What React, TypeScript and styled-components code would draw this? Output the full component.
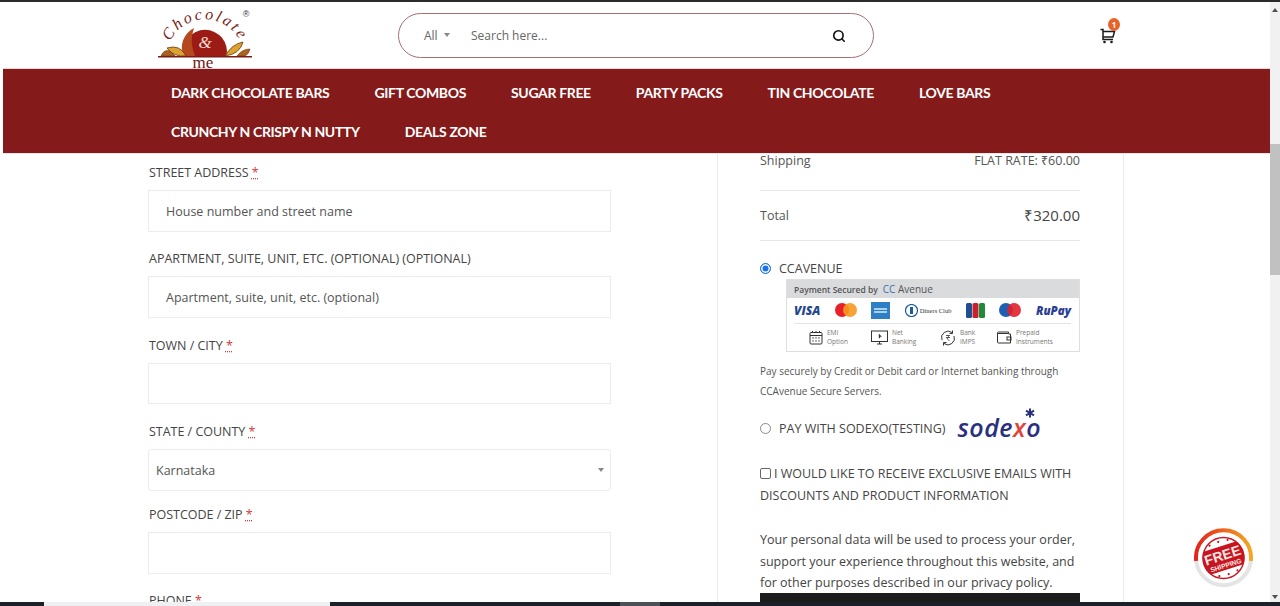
import { createGlobalStyle } from 'styled-components';
import styled from 'styled-components';
import { Search } from 'lucide-react';

const GlobalStyle = createGlobalStyle`
  html, body {
    margin: 0;
    padding: 0;
    background: #fff;
    overflow: hidden;
  }
  * {
    box-sizing: border-box;
  }
`;

const Frame = styled.div`
  width: 1280px;
  height: 606px;
  display: flex;
  flex-direction: column;
  overflow: hidden;
  position: relative;
  font-family: 'Open Sans', sans-serif;
  color: #444;
`;

const TopEdge = styled.div`
  height: 2px;
  flex: none;
  background: #2b2b2b;
`;

const Middle = styled.div`
  flex: 1;
  min-height: 0;
  display: flex;
`;

const Viewport = styled.div`
  flex: 1;
  min-width: 0;
  overflow: hidden;
  padding-left: 3px;
`;

const Header = styled.header`
  height: 67px;
  display: flex;
  align-items: flex-start;
  border-bottom: 1px solid #e9d5d5;
`;

const LogoBox = styled.div`
  width: 100px;
  height: 62px;
  margin-left: 153px;
  margin-top: 2px;
  flex: none;
`;

const SearchBar = styled.div`
  width: 476px;
  height: 45px;
  margin-left: 142px;
  margin-top: 11px;
  border: 1px solid #a66f70;
  border-radius: 23px;
  display: flex;
  align-items: center;
  padding-left: 25px;
  font-size: 12px;
  color: #666;
`;

const AllLabel = styled.span`
  width: 47px;
  display: flex;
  align-items: center;
  gap: 6px;
  &::after {
    content: '';
    border-left: 3px solid transparent;
    border-right: 3px solid transparent;
    border-top: 4px solid #888;
    margin-top: -1px;
  }
`;

const SearchText = styled.span`
  flex: 1;
  color: #666;
`;

const SearchButton = styled.span`
  width: 40px;
  margin-right: 14px;
  display: flex;
  justify-content: center;
  color: #111;
`;

const CartWrap = styled.div`
  position: relative;
  margin-left: 226px;
  margin-top: 25px;
  width: 16px;
  height: 16px;
`;

const CartBadge = styled.span`
  position: absolute;
  top: -9px;
  left: 8px;
  width: 12px;
  height: 13px;
  border-radius: 50%;
  background: #e8622a;
  color: #fff;
  font-size: 8px;
  font-weight: 700;
  line-height: 13px;
  text-align: center;
`;

const Nav = styled.nav`
  height: 85px;
  background: #841b1a;
  padding: 4px 0 0 168px;
  border-bottom: 1px solid #f3e5e5;
`;

const NavRow = styled.div`
  height: 39px;
  display: flex;
  align-items: center;
  gap: 45px;
`;

const NavItem = styled.a`
  color: #fff;
  font-family: 'Lato', sans-serif;
  font-size: 14px;
  font-weight: 700;
  letter-spacing: -0.35px;
  white-space: nowrap;
`;

const Content = styled.main`
  display: flex;
  align-items: flex-start;
  padding-left: 145px;
`;

const FormColumn = styled.section`
  width: 463px;
  padding-top: 9px;
  flex: none;
`;

const Field = styled.div<{ $after: number }>`
  margin-bottom: ${(p) => p.$after}px;
`;

const Label = styled.label`
  display: block;
  height: 20px;
  line-height: 20px;
  margin-bottom: 7px;
  padding-left: 1px;
  font-size: 12.5px;
  letter-spacing: -0.02px;
  color: #444;
  white-space: nowrap;
`;

const Req = styled.abbr`
  color: #d23b3b;
  text-decoration: underline dotted;
`;

const InputBox = styled.div<{ $h: number }>`
  height: ${(p) => p.$h}px;
  border: 1px solid #ececec;
  display: flex;
  align-items: center;
  padding-left: 17px;
  font-size: 12.5px;
  color: #555;
`;

const SelectBox = styled.div`
  height: 42px;
  border: 1px solid #ececec;
  border-radius: 3px;
  display: flex;
  align-items: center;
  justify-content: space-between;
  padding: 0 6px 0 7px;
  font-size: 12.5px;
  color: #555;
  &::after {
    content: '';
    border-left: 3px solid transparent;
    border-right: 3px solid transparent;
    border-top: 4px solid #888;
  }
`;

const OrderColumn = styled.aside`
  width: 407px;
  height: 449px;
  margin-left: 106px;
  padding: 0 43px 0 42px;
  flex: none;
  border-left: 1px solid #eaeaea;
  border-right: 1px solid #eaeaea;
  font-size: 12.5px;
  color: #555;
`;

const TotalRow = styled.div<{ $h: number; $under?: number }>`
  height: ${(p) => p.$h}px;
  padding-bottom: ${(p) => p.$under ?? 0}px;
  display: flex;
  align-items: center;
  justify-content: space-between;
  border-bottom: 1px solid #e6e6e6;
`;

const TotalAmount = styled.span`
  font-size: 15px;
  color: #444;
  padding-bottom: 2px;
`;

const MethodRow = styled.div<{ $top: number }>`
  margin-top: ${(p) => p.$top}px;
  height: 20px;
  display: flex;
  align-items: center;
  gap: 8px;
  color: #444;
  white-space: nowrap;
`;

const Radio = styled.span<{ $on?: boolean }>`
  width: 11px;
  height: 11px;
  flex: none;
  border-radius: 50%;
  border: 1px solid ${(p) => (p.$on ? '#1a73e8' : '#8a8a8a')};
  background: ${(p) => (p.$on ? '#1a73e8' : '#fff')};
  box-shadow: ${(p) => (p.$on ? 'inset 0 0 0 1.5px #fff' : 'none')};
`;

const PayCard = styled.div`
  width: 294px;
  height: 73px;
  margin: 1px 0 0 26px;
  border: 1px solid #dedede;
`;

const PayHead = styled.div`
  height: 18px;
  background: #d9dbdd;
  display: flex;
  align-items: center;
  padding-left: 7px;
  gap: 5px;
  font-size: 8.5px;
  font-weight: 600;
  color: #555;
`;

const CcMark = styled.span`
  font-size: 10px;
  font-weight: 400;
  color: #555;
  b {
    color: #3b6fa8;
    font-weight: 400;
  }
`;

const BrandRow = styled.div`
  height: 26px;
  margin: 0 8px 0 7px;
  display: flex;
  align-items: center;
  justify-content: space-between;
  border-bottom: 1px solid #e4e4e4;
`;

const BrandText = styled.span<{ $c: string; $s: number }>`
  font-size: ${(p) => p.$s}px;
  font-weight: 800;
  font-style: italic;
  color: ${(p) => p.$c};
`;

const DinersText = styled.span`
  display: flex;
  align-items: center;
  gap: 2px;
  font-family: 'Liberation Serif', serif;
  font-size: 6.5px;
  color: #333;
  white-space: nowrap;
`;

const OptionRow = styled.div`
  height: 27px;
  display: flex;
  align-items: center;
  padding-left: 22px;
`;

const PayOption = styled.div<{ $w: number }>`
  width: ${(p) => p.$w}px;
  display: flex;
  align-items: center;
  gap: 4px;
  font-size: 6.5px;
  line-height: 8.5px;
  color: #777;
`;

const PayNote = styled.p`
  margin: 9px 0 0;
  font-size: 10px;
  line-height: 20px;
  color: #555;
`;

const SodexoMark = styled.span`
  position: relative;
  margin: 0 0 3px 4px;
  font-size: 25px;
  font-weight: 600;
  font-style: italic;
  line-height: 20px;
  color: #29307f;
  letter-spacing: 0.5px;
  i {
    color: #e2433b;
  }
`;

const SodexoStar = styled.svg`
  position: absolute;
  right: 6px;
  top: -9px;
`;

const ConsentRow = styled.div`
  margin-top: 25px;
  line-height: 21.5px;
  color: #444;
`;

const Checkbox = styled.span`
  display: inline-block;
  width: 11px;
  height: 11px;
  margin-right: 3px;
  border: 1px solid #666;
  border-radius: 2px;
  vertical-align: -1px;
`;

const Privacy = styled.p`
  margin: 23px 0 0;
  line-height: 21.5px;
  color: #444;
`;

const PlaceOrder = styled.div`
  height: 20px;
  margin-top: -1px;
  background: #1c1c1c;
`;

const Scrollbar = styled.div`
  width: 10px;
  flex: none;
  background: #f1f1f1;
  display: flex;
  flex-direction: column;
  align-items: center;
  padding-top: 142px;
  position: relative;
`;

const Thumb = styled.div`
  width: 100%;
  height: 131px;
  background: #c1c1c1;
`;

const ScrollArrow = styled.span<{ $down?: boolean }>`
  position: absolute;
  ${(p) => (p.$down ? 'bottom: 3px;' : 'top: 6px;')}
  border-left: 3px solid transparent;
  border-right: 3px solid transparent;
  ${(p) => (p.$down ? 'border-top: 4px solid #505050;' : 'border-bottom: 4px solid #505050;')}
`;

const BottomBar = styled.div`
  height: 4px;
  flex: none;
  display: flex;
  background: #1a2129;
  padding-left: 44px;
`;

const BottomPiece = styled.span<{ $w: number; $gap?: number; $c: string }>`
  width: ${(p) => p.$w}px;
  margin-left: ${(p) => p.$gap ?? 0}px;
  background: ${(p) => p.$c};
`;

const ShippingBadge = styled.div`
  position: absolute;
  left: 1193px;
  top: 527px;
  width: 62px;
  height: 62px;
`;

const Logo = () => (
  <svg width="100" height="64" viewBox="0 0 100 64">
    <defs>
      <path id="logoArc" d="M10.1 51.6 A39 39 0 0 1 87.9 51.6" />
    </defs>
    <path d="M27.4 52 A22 22 0 1 1 70.6 52 Z" fill="#9c1b14" />
    <path d="M27.4 52 A22 22 0 0 1 38 24 Q33 37 39 52 Z" fill="#b5481e" />
    <path d="M11 44 Q24 40 30 52 Q17 53 11 44 Z" fill="#dca22f" stroke="#6d3410" strokeWidth="0.8" />
    <path d="M69 52 Q76 40 87 38 Q84 50 69 52 Z" fill="#dca22f" stroke="#6d3410" strokeWidth="0.8" />
    <path d="M5 52 Q8 45 14 47 L19 52 Z" fill="#a8641f" stroke="#6d3410" strokeWidth="0.6" />
    <path d="M81 52 Q86 45 94 45 Q93 50 89 52 Z" fill="#a8641f" stroke="#6d3410" strokeWidth="0.6" />
    <rect x="2" y="52" width="94" height="1.5" fill="#7b1b16" />
    <text x="49" y="44" textAnchor="middle" fontFamily="Liberation Serif, serif" fontStyle="italic" fontSize="17" fill="#f5dfd6">&amp;</text>
    <text fontFamily="Liberation Serif, serif" fontStyle="italic" fontSize="16" fill="#7b1f1a" letterSpacing="2.4" textAnchor="middle">
      <textPath href="#logoArc" startOffset="50%">Chocolate</textPath>
    </text>
    <text x="47" y="63.5" textAnchor="middle" fontFamily="Liberation Serif, serif" fontSize="17" fill="#6a1a16">me</text>
    <text x="90" y="13" textAnchor="middle" fontFamily="Liberation Sans, sans-serif" fontSize="9" fill="#333">®</text>
  </svg>
);

const CartIcon = () => (
  <svg width="16" height="16" viewBox="0 0 16 16" fill="none" stroke="#1a1a1a" strokeWidth="1.5">
    <path d="M0.5 1.5H3V11.5H13" />
    <path d="M3 3.5H14.5L13 9H3" />
    <circle cx="4.5" cy="14" r="1.3" fill="#1a1a1a" stroke="none" />
    <circle cx="11.5" cy="14" r="1.3" fill="#1a1a1a" stroke="none" />
  </svg>
);

const MasterMark = ({ a, b }: { a: string; b: string }) => (
  <svg width="22" height="17" viewBox="0 0 22 17">
    <circle cx="7" cy="8" r="7" fill={a} />
    <circle cx="15" cy="8" r="7" fill={b} fillOpacity="0.9" />
  </svg>
);

const AmexMark = () => (
  <svg width="19" height="17" viewBox="0 0 19 17">
    <rect width="19" height="17" fill="#2f7fc4" />
    <rect x="3" y="6" width="13" height="2" fill="#a9d2ef" />
    <rect x="3" y="9" width="13" height="2" fill="#a9d2ef" />
  </svg>
);

const JcbMark = () => (
  <svg width="19" height="15" viewBox="0 0 19 15">
    <rect width="6" height="15" rx="1.5" fill="#1d4f91" />
    <rect x="6.5" width="6" height="15" rx="1.5" fill="#c8202f" />
    <rect x="13" width="6" height="15" rx="1.5" fill="#1f8a3b" />
  </svg>
);

const DinersMark = () => (
  <svg width="13" height="13" viewBox="0 0 13 13">
    <circle cx="6.5" cy="6.5" r="6" fill="none" stroke="#1d5c9c" strokeWidth="1.2" />
    <rect x="5" y="3" width="3" height="7" fill="#1d5c9c" />
  </svg>
);

const EmiIcon = () => (
  <svg width="14" height="15" viewBox="0 0 14 15" fill="none" stroke="#333">
    <rect x="1" y="2.5" width="12" height="11.5" rx="1" />
    <path d="M1 5.5h12M3.5 1v2M7 1v2M10.5 1v2" />
    <path d="M3.5 8h1M6.5 8h1M9.5 8h1M3.5 11h1M6.5 11h1M9.5 11h1" strokeWidth="1.4" />
  </svg>
);

const NetIcon = () => (
  <svg width="17" height="15" viewBox="0 0 17 15" fill="none" stroke="#333">
    <rect x="0.5" y="1" width="16" height="10.5" />
    <path d="M6 14h5M8.5 11.5V14" />
    <path d="M8 4l2.5 2.5H9V8H8z" fill="#333" strokeWidth="0.4" />
  </svg>
);

const BankIcon = () => (
  <svg width="16" height="16" viewBox="0 0 16 16" fill="none" stroke="#333">
    <path d="M2 10A6.5 6.5 0 0 1 12 2.5M14 6A6.5 6.5 0 0 1 4 13.5" />
    <path d="M12.5 0.5v3h-3M3.5 15.5v-3h3" />
    <path d="M6 5.5h4M6 7.5h4M7 5.5c2 0 2 3 0 3l2.5 2.5" strokeWidth="0.8" />
  </svg>
);

const WalletIcon = () => (
  <svg width="16" height="13" viewBox="0 0 16 13" fill="none" stroke="#333">
    <path d="M1.5 2.5h11V1h-10a1 1 0 0 0-1 1.5v8.5a1 1 0 0 0 1 1h12V3h-2" />
    <rect x="11" y="6" width="4" height="3" />
  </svg>
);

const FreeShipping = () => (
  <svg width="62" height="62" viewBox="0 0 62 62">
    <defs>
      <linearGradient id="ringGrad" x1="0" x2="1" y1="0" y2="0">
        <stop offset="0" stopColor="#e3241b" />
        <stop offset="1" stopColor="#f5a623" />
      </linearGradient>
      <clipPath id="stampClip">
        <circle cx="30.5" cy="31" r="21" />
      </clipPath>
    </defs>
    <path d="M3.2 34 A27.5 27.5 0 0 0 57.8 34" fill="none" stroke="#e4e4e4" strokeWidth="4" />
    <path d="M3.2 34 A27.5 27.5 0 1 1 57.8 34" fill="none" stroke="url(#ringGrad)" strokeWidth="4" />
    <circle cx="30.5" cy="31" r="21" fill="#fff" />
    <g clipPath="url(#stampClip)">
      <g transform="rotate(-18 30.5 31)">
        <rect x="8" y="19" width="45" height="24" fill="#c8141f" />
      </g>
    </g>
    <circle cx="30.5" cy="31" r="20.5" fill="none" stroke="#c8141f" strokeWidth="1.4" />
    <g transform="rotate(-18 30.5 31)">
      <g fill="#c8141f">
        <circle cx="21" cy="15" r="1.1" />
        <circle cx="30.5" cy="14" r="1.1" />
        <circle cx="40" cy="15" r="1.1" />
        <circle cx="21" cy="47" r="1.1" />
        <circle cx="30.5" cy="48" r="1.1" />
        <circle cx="40" cy="47" r="1.1" />
      </g>
      <g textAnchor="middle" fontFamily="Liberation Sans, sans-serif" fill="#fbe7e4">
        <text x="30.5" y="33" fontSize="14" fontWeight="700">FREE</text>
        <text x="30.5" y="41" fontSize="6.8" fontWeight="700">SHIPPING</text>
      </g>
    </g>
  </svg>
);

const App = () => {
  return (
    <Frame>
      <GlobalStyle />
      <TopEdge />
      <Middle>
        <Viewport>
          <Header>
            <LogoBox>
              <Logo />
            </LogoBox>
            <SearchBar>
              <AllLabel>All</AllLabel>
              <SearchText>Search here...</SearchText>
              <SearchButton>
                <Search size={14} strokeWidth={2.8} />
              </SearchButton>
            </SearchBar>
            <CartWrap>
              <CartIcon />
              <CartBadge>1</CartBadge>
            </CartWrap>
          </Header>
          <Nav>
            <NavRow>
              <NavItem>DARK CHOCOLATE BARS</NavItem>
              <NavItem>GIFT COMBOS</NavItem>
              <NavItem>SUGAR FREE</NavItem>
              <NavItem>PARTY PACKS</NavItem>
              <NavItem>TIN CHOCOLATE</NavItem>
              <NavItem>LOVE BARS</NavItem>
            </NavRow>
            <NavRow>
              <NavItem>CRUNCHY N CRISPY N NUTTY</NavItem>
              <NavItem>DEALS ZONE</NavItem>
            </NavRow>
          </Nav>
          <Content>
            <FormColumn>
              <Field $after={17}>
                <Label>STREET ADDRESS <Req>*</Req></Label>
                <InputBox $h={42}>House number and street name</InputBox>
              </Field>
              <Field $after={18}>
                <Label>APARTMENT, SUITE, UNIT, ETC. (OPTIONAL) (OPTIONAL)</Label>
                <InputBox $h={42}>Apartment, suite, unit, etc. (optional)</InputBox>
              </Field>
              <Field $after={18}>
                <Label>TOWN / CITY <Req>*</Req></Label>
                <InputBox $h={41} />
              </Field>
              <Field $after={14}>
                <Label>STATE / COUNTY <Req>*</Req></Label>
                <SelectBox>Karnataka</SelectBox>
              </Field>
              <Field $after={17}>
                <Label>POSTCODE / ZIP <Req>*</Req></Label>
                <InputBox $h={42} />
              </Field>
              <Field $after={0}>
                <Label>PHONE <Req>*</Req></Label>
              </Field>
            </FormColumn>
            <OrderColumn>
              <TotalRow $h={37} $under={23}>
                <span>Shipping</span>
                <span>FLAT RATE: ₹60.00</span>
              </TotalRow>
              <TotalRow $h={50}>
                <span>Total</span>
                <TotalAmount>₹320.00</TotalAmount>
              </TotalRow>
              <MethodRow $top={17}>
                <Radio $on />
                CCAVENUE
              </MethodRow>
              <PayCard>
                <PayHead>
                  Payment Secured by
                  <CcMark><b>CC</b> Avenue</CcMark>
                </PayHead>
                <BrandRow>
                  <BrandText $c="#26478f" $s={12}>VISA</BrandText>
                  <MasterMark a="#e8202a" b="#f59a1f" />
                  <AmexMark />
                  <DinersText><DinersMark />Diners Club</DinersText>
                  <JcbMark />
                  <MasterMark a="#1d5fb5" b="#e0202c" />
                  <BrandText $c="#2b3f96" $s={11.5}>RuPay</BrandText>
                </BrandRow>
                <OptionRow>
                  <PayOption $w={62}><EmiIcon /><span>EMI<br />Option</span></PayOption>
                  <PayOption $w={69}><NetIcon /><span>Net<br />Banking</span></PayOption>
                  <PayOption $w={56}><BankIcon /><span>Bank<br />IMPS</span></PayOption>
                  <PayOption $w={80}><WalletIcon /><span>Prepaid<br />Instruments</span></PayOption>
                </OptionRow>
              </PayCard>
              <PayNote>
                Pay securely by Credit or Debit card or Internet banking through CCAvenue Secure Servers.
              </PayNote>
              <MethodRow $top={17}>
                <Radio />
                PAY WITH SODEXO(TESTING)
                <SodexoMark>
                  sode<i>x</i>o
                  <SodexoStar width="10" height="10" viewBox="0 0 12 12" stroke="#29307f" strokeWidth="2.4">
                    <path d="M6 0.5V11.5M1.2 3.2L10.8 8.8M10.8 3.2L1.2 8.8" />
                  </SodexoStar>
                </SodexoMark>
              </MethodRow>
              <ConsentRow>
                <Checkbox />I WOULD LIKE TO RECEIVE EXCLUSIVE EMAILS WITH DISCOUNTS AND PRODUCT INFORMATION
              </ConsentRow>
              <Privacy>
                Your personal data will be used to process your order, support your experience throughout this website, and for other purposes described in our privacy policy.
              </Privacy>
              <PlaceOrder />
            </OrderColumn>
          </Content>
        </Viewport>
        <Scrollbar>
          <ScrollArrow />
          <Thumb />
          <ScrollArrow $down />
        </Scrollbar>
      </Middle>
      <BottomBar>
        <BottomPiece $w={286} $c="#eef0f1" />
        <BottomPiece $w={40} $gap={290} $c="#4a5157" />
      </BottomBar>
      <ShippingBadge>
        <FreeShipping />
      </ShippingBadge>
    </Frame>
  );
};

export default App;
